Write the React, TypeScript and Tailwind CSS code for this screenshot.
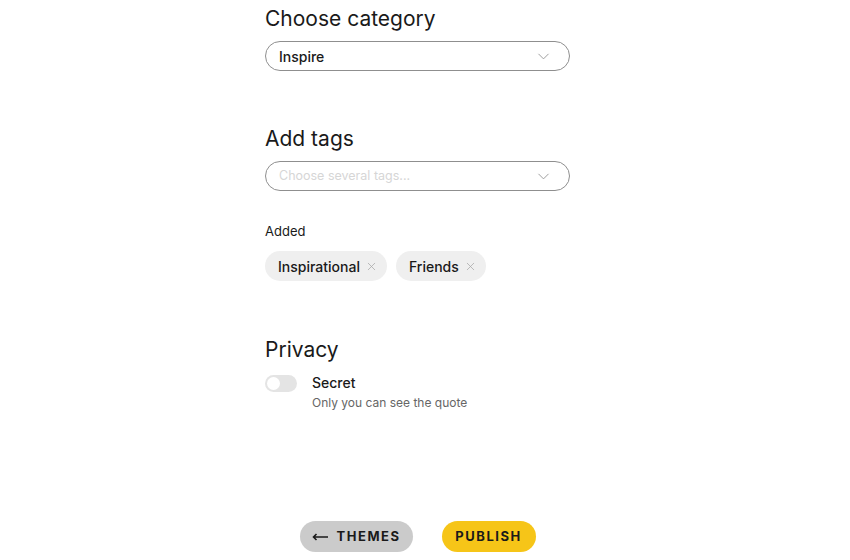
import { ChevronDown, X } from "lucide-react";

const tags = ["Inspirational", "Friends"];

const Select = ({ value, placeholder }: { value?: string; placeholder?: string }) => (
  <div className="flex items-center justify-between h-[30px] rounded-full border border-[#8f8f8f] pl-[13px] pr-[16px]">
    {value ? (
      <span className="text-[14px] font-medium text-[#1a1a1a]">{value}</span>
    ) : (
      <span className="text-[12.5px] text-[#d6d6d6]">{placeholder}</span>
    )}
    <ChevronDown size={19} strokeWidth={1.2} className="text-[#9a9a9a]" />
  </div>
);

const App = () => {
  return (
    <div
      className="w-[835px] min-h-[560px] bg-white text-[#1a1a1a]"
      style={{ fontFamily: "Inter, 'Noto Sans', sans-serif" }}
    >
      <div className="mx-auto w-[305px] pt-[5px]">
        <h2 className="text-[21px] leading-[28px] font-normal">Choose category</h2>
        <div className="mt-[8px]">
          <Select value="Inspire" />
        </div>

        <h2 className="mt-[54px] text-[21px] leading-[28px] font-normal">Add tags</h2>
        <div className="mt-[8px]">
          <Select placeholder="Choose several tags..." />
        </div>

        <div className="mt-[30px] text-[13px] leading-[20px]">Added</div>
        <div className="mt-[10px] flex gap-[9px]">
          {tags.map((t) => (
            <div
              key={t}
              className="flex items-center gap-[5px] h-[30px] rounded-full bg-[#efefef] pl-[13px] pr-[9px]"
            >
              <span className="text-[14px] font-medium">{t}</span>
              <X size={13} strokeWidth={1.4} className="text-[#a8a8a8]" />
            </div>
          ))}
        </div>

        <h2 className="mt-[55px] text-[21px] leading-[28px] font-normal">Privacy</h2>
        <div className="mt-[9px] flex gap-[15px]">
          <div className="mt-[2px] w-[32px] h-[17px] rounded-full bg-[#e4e4e4] flex items-center pl-[2px]">
            <div className="w-[13px] h-[13px] rounded-full bg-white" />
          </div>
          <div>
            <div className="text-[14px] leading-[20px] font-medium">Secret</div>
            <div className="text-[12px] leading-[20px] text-[#666]">Only you can see the quote</div>
          </div>
        </div>
      </div>

      <div className="mt-[108px] flex justify-center gap-[29px]">
        <button className="flex items-center gap-[8px] h-[31px] w-[113px] justify-center rounded-full bg-[#cbcbcb] text-[13px] font-bold tracking-[1.5px] text-[#1a1a1a]">
          <svg width="17" height="8" viewBox="0 0 17 8" fill="none" stroke="#1a1a1a" strokeWidth="1.6">
            <path d="M16 4H1.5M4.5 1L1.5 4l3 3" />
          </svg>
          THEMES
        </button>
        <button className="h-[31px] w-[94px] rounded-full bg-[#f6c518] text-[13px] font-bold tracking-[1.5px] text-[#1a1a1a]">
          PUBLISH
        </button>
      </div>
    </div>
  );
};

export default App;
